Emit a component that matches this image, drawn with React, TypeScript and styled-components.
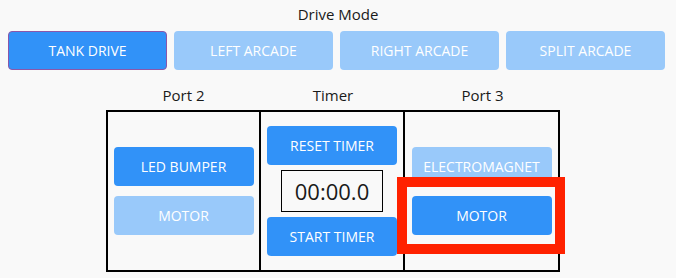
import React, { useState } from "react";
import styled, { createGlobalStyle } from "styled-components";

const GlobalStyle = createGlobalStyle`
  body {
    margin: 0;
    background: #f9f9f9;
    font-family: "Open Sans", "Noto Sans", sans-serif;
    color: #1a1a1a;
  }
`;

const Page = styled.div`
  display: flex;
  flex-direction: column;
  align-items: center;
  width: 676px;
`;

const Title = styled.div`
  font-size: 15px;
  line-height: 20px;
  margin-top: 4px;
  height: 27px;
`;

const ModeRow = styled.div`
  display: flex;
  gap: 7px;
  align-self: flex-start;
  margin-left: 8px;
`;

const Button = styled.button<{ $active?: boolean; $w?: number; $focus?: boolean }>`
  width: ${(p) => p.$w ?? 140}px;
  height: 39px;
  border: ${(p) => (p.$focus ? "1px solid #8b57a9" : "none")};
  border-radius: 4px;
  background: ${(p) => (p.$active ? "#3192f8" : "#99c9fa")};
  color: #fff;
  font-family: "Open Sans", "Noto Sans", sans-serif;
  font-size: 14px;
  text-transform: uppercase;
  padding: 0;
  cursor: pointer;
`;

const Board = styled.div`
  display: grid;
  grid-template-columns: 155px 144px 155px;
  margin-top: 15px;
  margin-left: -10px;
`;

const ColHead = styled.div`
  text-align: center;
  font-size: 15px;
  line-height: 20px;
  height: 25px;
`;

const Cell = styled.div<{ $gap: number; $first?: boolean }>`
  height: 158px;
  border-top: 2px solid #000;
  border-bottom: 2px solid #000;
  border-left: ${(p) => (p.$first ? "2px solid #000" : "none")};
  border-right: 2px solid #000;
  display: flex;
  flex-direction: column;
  align-items: center;
  justify-content: center;
  gap: ${(p) => p.$gap}px;
`;

const Clock = styled.div`
  width: 100px;
  height: 40px;
  border: 1px solid #000;
  display: flex;
  align-items: center;
  justify-content: center;
  font-size: 22px;
`;

const Highlight = styled.div`
  position: relative;
`;

const RedFrame = styled.div`
  position: absolute;
  left: -15px;
  right: -13px;
  top: -19px;
  bottom: -19px;
  border: 10px solid #ff2200;
  pointer-events: none;
`;

const modes = ["Tank Drive", "Left Arcade", "Right Arcade", "Split Arcade"];

export default function App() {
  const [mode, setMode] = useState(0);
  return (
    <Page>
      <GlobalStyle />
      <Title>Drive Mode</Title>
      <ModeRow>
        {modes.map((m, i) => (
          <Button key={m} $w={159} $active={i === mode} $focus={i === mode} onClick={() => setMode(i)}>
            {m}
          </Button>
        ))}
      </ModeRow>
      <Board>
        <ColHead>Port 2</ColHead>
        <ColHead>Timer</ColHead>
        <ColHead>Port 3</ColHead>
        <Cell $gap={10} $first>
          <Button $active>LED Bumper</Button>
          <Button>Motor</Button>
        </Cell>
        <Cell $gap={5}>
          <Button $active $w={130}>Reset Timer</Button>
          <Clock>00:00.0</Clock>
          <Button $active $w={130}>Start Timer</Button>
        </Cell>
        <Cell $gap={10}>
          <Button>Electromagnet</Button>
          <Highlight>
            <Button $active>Motor</Button>
            <RedFrame />
          </Highlight>
        </Cell>
      </Board>
    </Page>
  );
}
